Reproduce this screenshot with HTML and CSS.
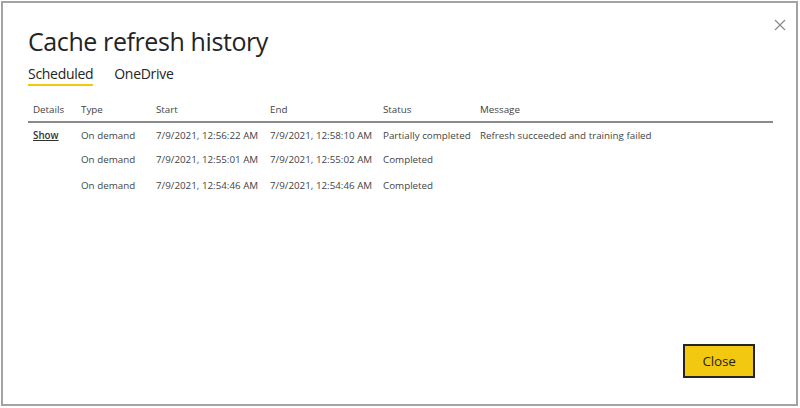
FILE: index.html
```html
<!DOCTYPE html>
<html>
<head>
<meta charset="utf-8">
<link rel="stylesheet" href="styles.css">
</head>
<body>
<div class="frame">
  <div class="dialog">
    <button class="x-btn" aria-label="Close">
      <svg width="12" height="12" viewBox="0 0 12 12"><path d="M1 1L11 11M11 1L1 11" stroke="#8a8a8a" stroke-width="1.2" fill="none"/></svg>
    </button>
    <h1 class="title">Cache refresh history</h1>
    <div class="tabs">
      <span class="tab active">Scheduled</span>
      <span class="tab">OneDrive</span>
    </div>
    <table class="grid">
      <thead>
        <tr>
          <th class="c-details">Details</th>
          <th class="c-type">Type</th>
          <th class="c-start">Start</th>
          <th class="c-end">End</th>
          <th class="c-status">Status</th>
          <th class="c-msg">Message</th>
        </tr>
      </thead>
      <tbody>
        <tr>
          <td class="c-details"><a class="show">Show</a></td>
          <td>On demand</td>
          <td>7/9/2021, 12:56:22 AM</td>
          <td>7/9/2021, 12:58:10 AM</td>
          <td>Partially completed</td>
          <td>Refresh succeeded and training failed</td>
        </tr>
        <tr>
          <td class="c-details"></td>
          <td>On demand</td>
          <td>7/9/2021, 12:55:01 AM</td>
          <td>7/9/2021, 12:55:02 AM</td>
          <td>Completed</td>
          <td></td>
        </tr>
        <tr>
          <td class="c-details"></td>
          <td>On demand</td>
          <td>7/9/2021, 12:54:46 AM</td>
          <td>7/9/2021, 12:54:46 AM</td>
          <td>Completed</td>
          <td></td>
        </tr>
      </tbody>
    </table>
    <div class="footer">
      <button class="close-btn">Close</button>
    </div>
  </div>
</div>
</body>
</html>
```
FILE: styles.css
```css
html, body {
  margin: 0;
  padding: 0;
  background: #ffffff;
}
body {
  font-family: "Open Sans", "Noto Sans", sans-serif;
  color: #333333;
}
.frame {
  margin: 1px 0 0 1px;
  width: 797px;
  height: 405px;
  box-sizing: border-box;
  border: 2px solid #a3a3a3;
  background: #fff;
}
.dialog {
  position: relative;
  height: 100%;
  box-sizing: border-box;
  padding: 21px 24px 0 25px;
  display: flex;
  flex-direction: column;
}
.x-btn {
  position: absolute;
  top: 15px;
  right: 9px;
  border: 0;
  background: transparent;
  padding: 0;
  width: 14px;
  height: 14px;
  display: flex;
  align-items: center;
  justify-content: center;
}
.title {
  margin: 0;
  font-weight: 400;
  font-size: 25px;
  line-height: 34px;
  color: #252423;
  letter-spacing: -0.4px;
}
.tabs {
  display: flex;
  gap: 21px;
  margin-top: 7px;
}
.tab {
  font-size: 14px;
  line-height: 18px;
  color: #252423;
  padding-bottom: 1px;
  border-bottom: 2px solid transparent;
  letter-spacing: -0.3px;
}
.tab.active {
  border-bottom-color: #f2c811;
}
.grid {
  margin-top: 17px;
  width: 745px;
  border-collapse: collapse;
  font-size: 9.8px;
  color: #444;
  table-layout: fixed;
}
.grid th, .grid td {
  box-sizing: border-box;
}
.grid th {
  font-weight: 400;
  text-align: left;
  padding: 0 0 4px 0;
  line-height: 14px;
  border-bottom: 2px solid #8a8a8a;
  color: #444;
}
.grid td {
  padding: 0;
  height: 26px;
  line-height: 14px;
  vertical-align: middle;
  white-space: nowrap;
}
.grid tbody tr:first-child td {
  height: 25px;
  padding-top: 1px;
}
.c-details { width: 53px; padding-left: 5px !important; }
.c-type { width: 75px; }
.c-start { width: 114px; }
.c-end { width: 113px; }
.c-status { width: 97px; }
.show {
  color: #333;
  text-decoration: underline;
  font-weight: 600;
  font-size: 9.8px;
}
.footer {
  margin-top: auto;
  display: flex;
  justify-content: flex-end;
  padding: 0 17px 26px 0;
}
.close-btn {
  width: 72px;
  height: 34px;
  background: #f2c811;
  border: 2px solid #252423;
  font-family: "Open Sans", "Noto Sans", sans-serif;
  font-size: 13.5px;
  color: #252423;
  padding: 0;
  letter-spacing: -0.2px;
}
```
